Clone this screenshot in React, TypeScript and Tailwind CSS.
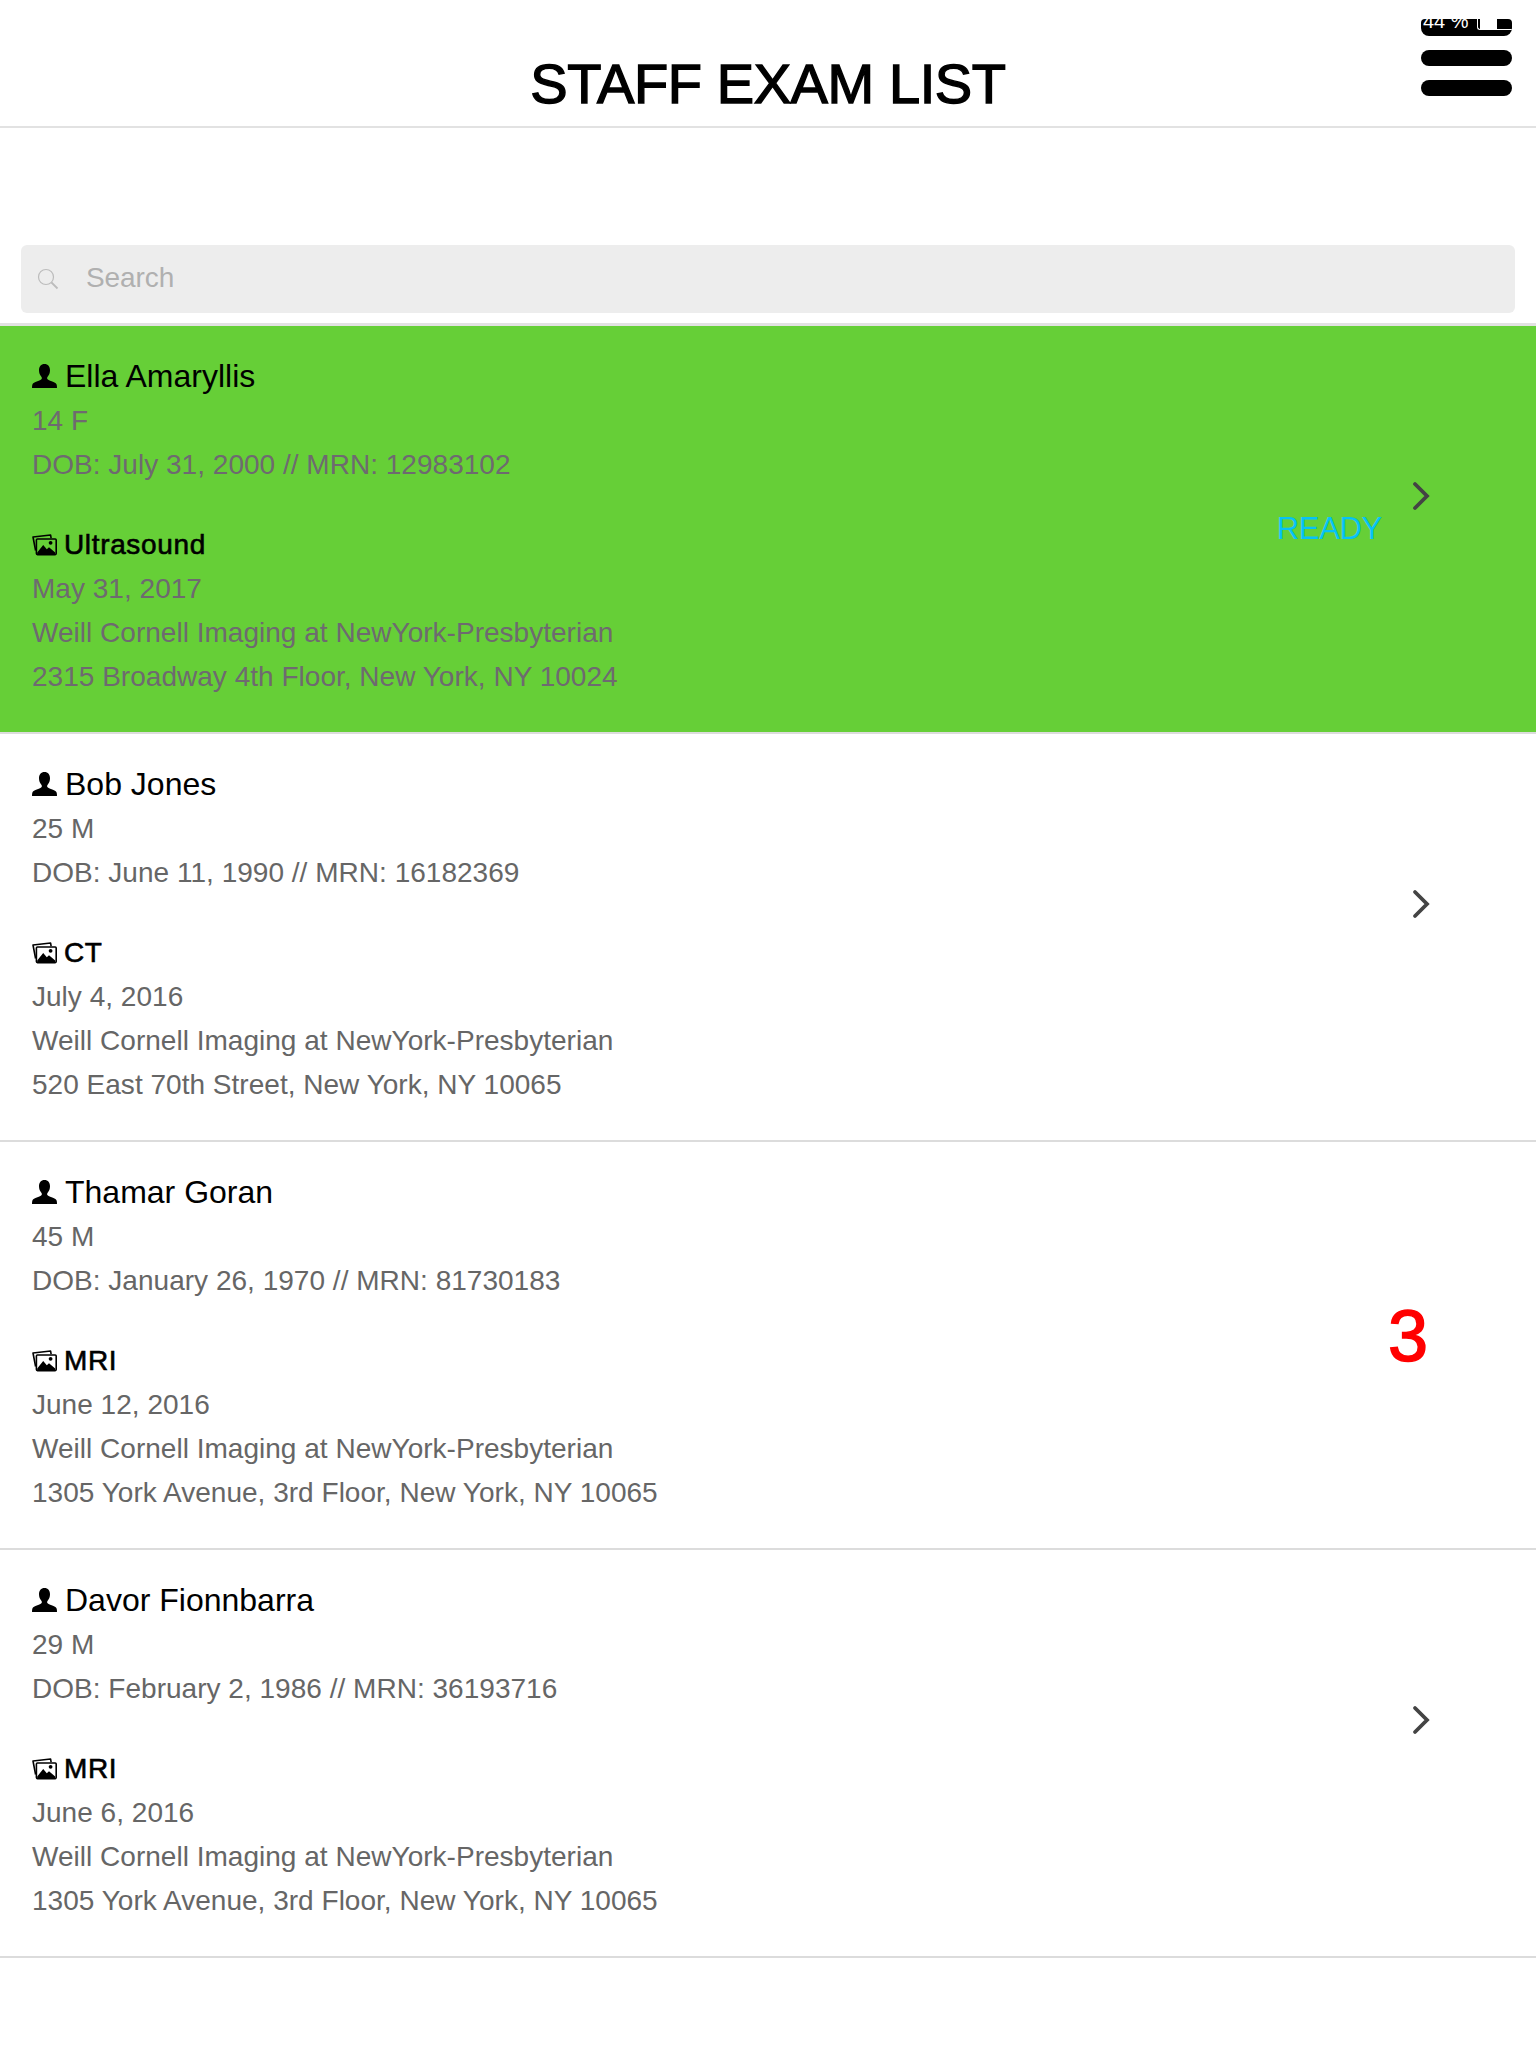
const font = "[font-family:'Liberation_Sans',Arial,sans-serif]";

const PersonIcon = () => (
  <svg width="25" height="24" viewBox="0 0 25 24" className="block shrink-0" fill="#000">
    <path d="M12.5 0C9 0 7 2.6 7 6.2c0 2.8 1 4.9 2.2 6.2 0.8 0.9 0.9 2 0.2 2.8-0.7 0.8-2 1.4-4 2.1C2.6 18.3 0.9 19.2 0.4 20.6 0.1 21.4 0 22.6 0 24h25c0-1.4-0.1-2.6-0.4-3.4-0.5-1.4-2.2-2.3-5-3.3-2-0.7-3.3-1.3-4-2.1-0.7-0.8-0.6-1.9 0.2-2.8C17 11.1 18 9 18 6.2 18 2.6 16 0 12.5 0z" />
  </svg>
);

const ImagesIcon = () => (
  <svg width="25" height="22" viewBox="0 0 25 22" className="block shrink-0">
    <path d="M3.6 16.5 1 3 18.6 1l0.5 3.2" fill="none" stroke="#000" strokeWidth="1.6" strokeLinejoin="round" />
    <rect x="4.4" y="5" width="19.8" height="15.6" rx="1" fill="none" stroke="#000" strokeWidth="1.6" />
    <path d="M5.2 20v-1.5l6-7.5 3.6 4.2 2.2-1.9 6.2 5.2v1.5z" fill="#000" />
    <circle cx="18.6" cy="8.8" r="1.9" fill="#000" />
  </svg>
);

const Chevron = ({ className }: { className?: string }) => (
  <svg width="18" height="30" viewBox="0 0 18 30" className={`block ${className ?? ""}`}>
    <path d="M3 3l12 12L3 27" fill="none" stroke="#444" strokeWidth="3.8" strokeLinecap="round" strokeLinejoin="miter" />
  </svg>
);

type Row = {
  name: string;
  age: string;
  dob: string;
  exam: string;
  date: string;
  addr: string;
  active?: boolean;
  right: "chevron" | "ready" | "count";
};

const rows: Row[] = [
  { name: "Ella Amaryllis", age: "14 F", dob: "DOB: July 31, 2000 // MRN: 12983102", exam: "Ultrasound", date: "May 31, 2017", addr: "2315 Broadway 4th Floor, New York, NY 10024", active: true, right: "ready" },
  { name: "Bob Jones", age: "25 M", dob: "DOB: June 11, 1990 // MRN: 16182369", exam: "CT", date: "July 4, 2016", addr: "520 East 70th Street, New York, NY 10065", right: "chevron" },
  { name: "Thamar Goran", age: "45 M", dob: "DOB: January 26, 1970 // MRN: 81730183", exam: "MRI", date: "June 12, 2016", addr: "1305 York Avenue, 3rd Floor, New York, NY 10065", right: "count" },
  { name: "Davor Fionnbarra", age: "29 M", dob: "DOB: February 2, 1986 // MRN: 36193716", exam: "MRI", date: "June 6, 2016", addr: "1305 York Avenue, 3rd Floor, New York, NY 10065", right: "chevron" },
];

const ExamRow = ({ r }: { r: Row }) => {
  const sub = `h-[44px] text-[28px] leading-[44px] tracking-[0.02px] ${r.active ? "text-[#6e6a70]" : "text-[#666666]"}`;
  return (
    <div className={`flex h-[408px] justify-between border-b-2 border-[#dcdcdc] pr-[106px] pl-[32px] ${r.active ? "bg-[#66cf37]" : "bg-white"}`}>
      <div className="pt-[30px]">
        <div className="flex h-[40px] items-center gap-[8px] text-[32px] leading-[40px] text-black">
          <PersonIcon />
          <span>{r.name}</span>
        </div>
        <div className={`mt-[3px] ${sub}`}>{r.age}</div>
        <div className={sub}>{r.dob}</div>
        <div className="mt-[36px] flex h-[44px] items-center gap-[7px] text-[28px] leading-[44px] tracking-[0.65px] text-black [-webkit-text-stroke:0.6px_#000]">
          <ImagesIcon />
          <span>{r.exam}</span>
        </div>
        <div className={sub}>{r.date}</div>
        <div className={sub}>Weill Cornell Imaging at NewYork-Presbyterian</div>
        <div className={sub}>{r.addr}</div>
      </div>

      <div className="flex items-center gap-[30px]">
        {r.right === "ready" && (
          <span className="text-[31px] leading-[40px] tracking-[-0.3px] text-[#06c2f8]">READY</span>
        )}
        {r.right === "count" ? (
          <span className="mr-[2px] mb-[18px] text-[72px] leading-[80px] text-[#ff0000] [-webkit-text-stroke:1.5px_#ff0000]">3</span>
        ) : (
          <Chevron className="mb-[66px]" />
        )}
      </div>
    </div>
  );
};

export default function App() {
  return (
    <div className={`min-h-[2048px] w-[1536px] bg-white ${font}`}>
      <header className="grid h-[128px] grid-cols-[1fr_auto_1fr] border-b-2 border-[#e2e2e2]">
        <div />
        <h1 className="pt-[52px] text-[56px] leading-[64px] font-normal tracking-[-0.4px] text-black [-webkit-text-stroke:1.4px_#000]">STAFF EXAM LIST</h1>
        <div className="flex flex-col items-end gap-[14px] pt-[19px] pr-[24px]">
          <div className="relative h-[17px] w-[91px] overflow-hidden rounded-t-[4px] rounded-b-[8px] bg-black">
            <span className="absolute top-[-8px] left-[2px] text-[20px] leading-[20px] whitespace-nowrap text-white">44 %</span>
            <div className="absolute top-0 left-[56px] h-[11px] w-[35px] rounded-bl-[3px] border-b border-l border-white">
              <div className="ml-[2px] h-full w-[17px] bg-white" />
            </div>
          </div>
          <div className="h-[16px] w-[91px] rounded-[8px] bg-black" />
          <div className="h-[16px] w-[91px] rounded-[8px] bg-black" />
        </div>
      </header>

      <div className="px-[21px] pt-[117px] pb-[10px]">
        <div className="flex h-[68px] items-center rounded-[6px] bg-[#ededed]">
          <svg width="22" height="22" viewBox="0 0 22 22" className="ml-[16px] block shrink-0" fill="none" stroke="#bcbcbc">
            <circle cx="9" cy="9" r="7.5" strokeWidth="1.2" />
            <path d="M14.5 14.5l6 6" strokeWidth="1.8" />
          </svg>
          <span className="mb-[2px] ml-[27px] text-[28px] tracking-[-0.1px] text-[#b0b0b0]">Search</span>
        </div>
      </div>

      <div className="border-t-[3px] border-[#e2e2e2]">
        {rows.map((r) => (
          <ExamRow key={r.name} r={r} />
        ))}
      </div>
    </div>
  );
}
